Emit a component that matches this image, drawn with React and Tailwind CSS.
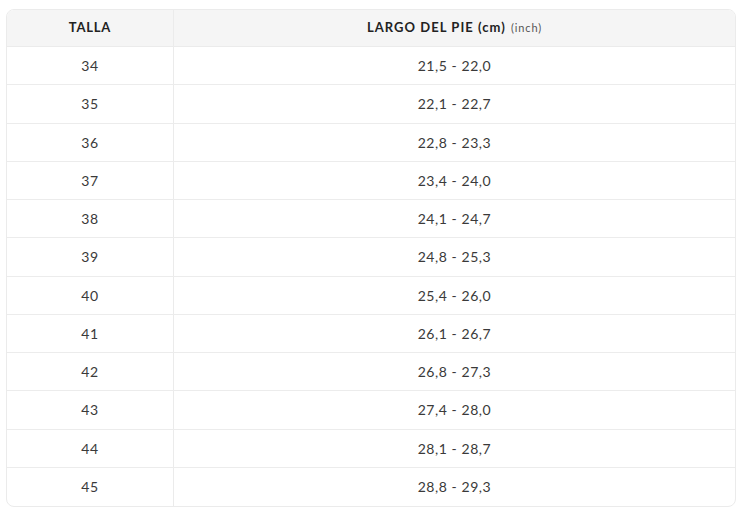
import React from 'react';

const rows = [
  ['34', '21,5 - 22,0'],
  ['35', '22,1 - 22,7'],
  ['36', '22,8 - 23,3'],
  ['37', '23,4 - 24,0'],
  ['38', '24,1 - 24,7'],
  ['39', '24,8 - 25,3'],
  ['40', '25,4 - 26,0'],
  ['41', '26,1 - 26,7'],
  ['42', '26,8 - 27,3'],
  ['43', '27,4 - 28,0'],
  ['44', '28,1 - 28,7'],
  ['45', '28,8 - 29,3'],
];

const App = () => {
  return (
    <div className="w-[746px] h-[516px] bg-white pt-[9px] pl-[6px]" style={{ fontFamily: 'Lato, "Noto Sans", sans-serif' }}>
      <div className="w-[730px] border border-[#ebebeb] rounded-[8px] overflow-hidden">
        <div className="grid grid-cols-[167px_1fr] bg-[#f5f5f5] h-[37px] border-b border-[#ebebeb]">
          <div className="flex items-center justify-center border-r border-[#ebebeb] text-[13px] font-bold tracking-[0.06em] text-[#222]">
            TALLA
          </div>
          <div className="flex items-center justify-center text-[13px] font-bold tracking-[0.08em] text-[#222]">
            LARGO DEL PIE (cm)
            <span className="ml-[5px] text-[11px] font-normal tracking-[0.08em] text-[#555]">(inch)</span>
          </div>
        </div>
        {rows.map((row, index) => (
          <div
            key={index}
            className={`grid grid-cols-[167px_1fr] h-[38.25px] ${index < rows.length - 1 ? 'border-b border-[#ececec]' : ''}`}
          >
            <div className="flex items-center justify-center border-r border-[#ebebeb] text-[14px] text-[#3a3a3a] tracking-[0.04em]">
              {row[0]}
            </div>
            <div className="flex items-center justify-center text-[14px] text-[#3a3a3a] tracking-[0.04em]">
              {row[1]}
            </div>
          </div>
        ))}
      </div>
    </div>
  );
};

export default App;
